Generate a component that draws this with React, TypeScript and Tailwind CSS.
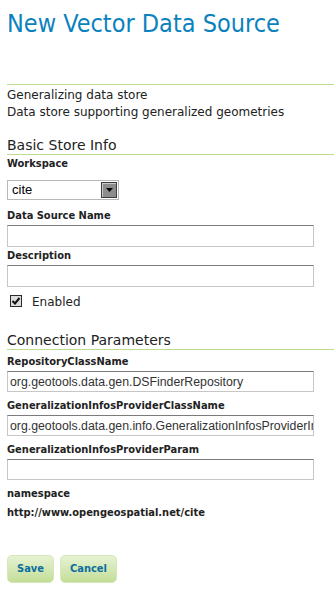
import React from "react";

const condensed = "font-['DejaVu_Sans_Condensed','DejaVu_Sans',sans-serif]";

// Simple form field: bold label above a text box
function Field({ label, value, h = "h-[22px]" }: { label: string; value?: string; h?: string }) {
  return (
    <div>
      <div className={`${condensed} text-[11px] leading-[14px] font-bold`}>{label}</div>
      <input
        readOnly
        value={value ?? ""}
        className={`mt-[2px] block w-[307px] ${h} border border-[#c6c6c6] border-t-[#7b7b7b] bg-white pl-[2px] pr-0 outline-none font-['Liberation_Sans',sans-serif] text-[12.3px] text-[#333]`}
      />
    </div>
  );
}

function SectionTitle({ children }: { children: React.ReactNode }) {
  return (
    <div className="border-b border-[#bddd8d] text-[14px] leading-[18px] text-[#222]">
      {children}
    </div>
  );
}

export default function App() {
  return (
    <div className="min-h-[594px] bg-white pl-[7px] font-['DejaVu_Sans',sans-serif] text-[#222]">
      <h1 className={`${condensed} pt-[9px] text-[25px] leading-[30px] text-[#0b82bd]`}>New Vector Data Source</h1>
      <div className="h-[46px] border-b border-[#bddd8d]" />

      <div className="mt-[2px] text-[12px] leading-[17px]">
        <p>Generalizing data store</p>
        <p>Data store supporting generalized geometries</p>
      </div>

      <div className="mt-[15px]">
        <SectionTitle>Basic Store Info</SectionTitle>
      </div>

      <div className={`${condensed} mt-[2px] text-[11px] leading-[14px] font-bold`}>Workspace</div>
      <div className="mt-[9px] w-[112px] h-[20px] border border-[#b8b8b8] bg-white flex items-center justify-between pl-[4px] pr-[1px]">
        <span className="font-['Liberation_Sans',sans-serif] text-[13px] text-black">cite</span>
        <span className="w-[16px] h-[16px] border border-[#3d3d3d] bg-[#8c8c8c] flex items-center justify-center shadow-[inset_1px_1px_0_#c8c8c8]">
          <svg width="7" height="4" viewBox="0 0 7 4">
            <path d="M0 0H7L3.5 4Z" fill="#000" />
          </svg>
        </span>
      </div>

      <div className="mt-[9px] flex flex-col gap-[2px]">
        <Field label="Data Source Name" />
        <Field label="Description" />
      </div>

      <div className="mt-[7px] flex items-end gap-[10px] pl-[3px]">
        <svg width="12" height="12" viewBox="0 0 12 12" className="mb-[4px]">
          <rect x="0.5" y="0.5" width="11" height="11" fill="#dcdcdc" stroke="#2c2c2c" />
          <path d="M2.5 6L5 8.5L9.5 3" fill="none" stroke="#111" strokeWidth="2" />
        </svg>
        <span className="text-[12px] leading-[17px]">Enabled</span>
      </div>

      <div className="mt-[20px]">
        <SectionTitle>Connection Parameters</SectionTitle>
      </div>

      <div className="mt-[5px] flex flex-col gap-[7px]">
        <Field label="RepositoryClassName" value="org.geotools.data.gen.DSFinderRepository" h="h-[21px]" />
        <Field
          label="GeneralizationInfosProviderClassName"
          value="org.geotools.data.gen.info.GeneralizationInfosProviderImpl"
          h="h-[21px]"
        />
        <Field label="GeneralizationInfosProviderParam" h="h-[21px]" />
      </div>

      <div className={`${condensed} mt-[4px] text-[11px] leading-[19px] font-bold`}>
        <div>namespace</div>
        <div>http://www.opengeospatial.net/cite</div>
      </div>

      <div className="mt-[33px] flex gap-[6px] pb-[10px]">
        <button className={`${condensed} h-[28px] px-[9px] rounded-[5px] border border-[#d6e8b8] bg-gradient-to-b from-[#e6f2d2] to-[#c3de98] text-[11px] font-bold text-[#0c6f9f]`}>
          Save
        </button>
        <button className={`${condensed} h-[28px] px-[9px] rounded-[5px] border border-[#d6e8b8] bg-gradient-to-b from-[#e6f2d2] to-[#c3de98] text-[11px] font-bold text-[#0c6f9f]`}>
          Cancel
        </button>
      </div>
    </div>
  );
}
